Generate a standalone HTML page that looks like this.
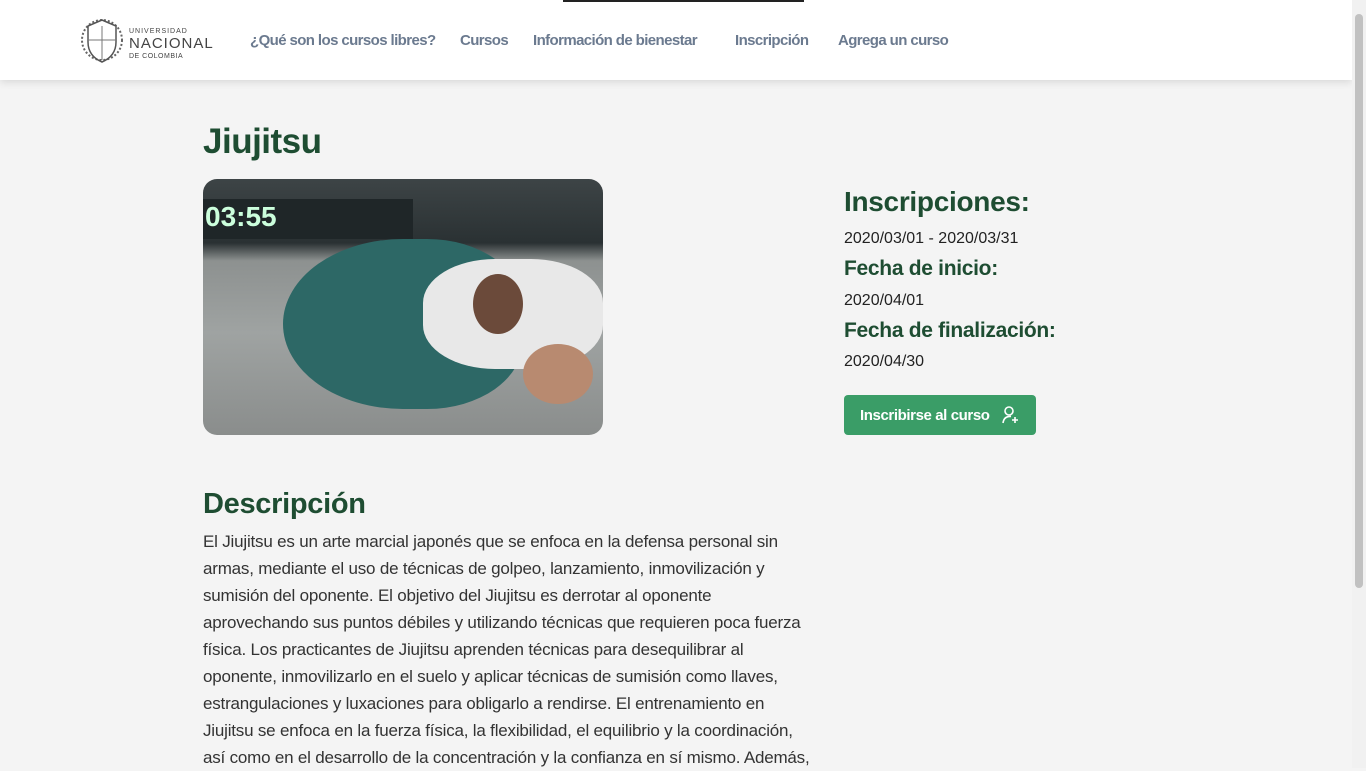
<!DOCTYPE html>
<html><head><meta charset="utf-8"><style>
*{margin:0;padding:0;box-sizing:border-box}
body{width:1366px;height:768px;overflow:hidden;background:#f4f4f4;font-family:"Liberation Sans",sans-serif;position:relative}
.hdr{position:absolute;left:0;top:0;width:1352px;height:80px;background:#fff;box-shadow:0 2px 8px rgba(0,0,0,.12)}
.topline{position:absolute;left:563px;top:0;width:241px;height:2px;background:#222}
.nav{position:absolute;top:32px;font-size:15px;font-weight:bold;color:#6b7a8f;letter-spacing:-.6px}
.logo{position:absolute;left:80px;top:12px}
.lt{position:absolute;left:129px;color:#444}
h1{position:absolute;left:203px;top:122px;font-size:35px;color:#1e4d32;letter-spacing:-.5px}
.img{position:absolute;left:203px;top:179px;width:400px;height:256px;border-radius:14px;overflow:hidden;background:linear-gradient(180deg,#3d4446 0%,#2a3133 25%,#8d9190 32%,#9fa3a2 60%,#8a8d8c 100%)}
.side h2{font-size:28px;color:#1e4d32;letter-spacing:-.3px}
.side h3{font-size:21px;color:#1e4d32;letter-spacing:-.3px}
.side p{font-size:16px;color:#222}
.btn{position:absolute;left:844px;top:395px;width:192px;height:40px;background:#3a9d67;border-radius:4px;color:#fff;font-weight:bold;font-size:15px;letter-spacing:-.4px;padding:12px 0 0 16px}
.desc{position:absolute;left:203px;top:488px;width:640px}
.desc h2{font-size:29px;color:#1e4d32;letter-spacing:-.3px;margin-bottom:7px}
.desc div{font-size:17px;line-height:27px;height:27px;color:#333;letter-spacing:-.2px;white-space:nowrap}
.sb{position:absolute;right:0;top:0;width:14px;height:768px;background:#f1f1f1}
.sb div{position:absolute;left:3px;top:14px;width:8px;height:574px;background:#c1c1c1;border-radius:4px}
</style></head><body>
<div class="hdr">
<svg class="logo" width="44" height="56" viewBox="0 0 44 56"><circle cx="22" cy="28" r="20" fill="none" stroke="#666" stroke-width="2" stroke-dasharray="2 2"/><path d="M22 8 L36 14 L36 30 Q36 44 22 50 Q8 44 8 30 L8 14Z" fill="none" stroke="#555" stroke-width="1.5"/><line x1="22" y1="14" x2="22" y2="48" stroke="#777"/><line x1="8" y1="28" x2="36" y2="28" stroke="#777"/></svg>
<div class="lt" style="top:28px;font-size:7px;letter-spacing:1px">UNIVERSIDAD</div>
<div class="lt" style="top:35px;font-size:15px;letter-spacing:1px">NACIONAL</div>
<div class="lt" style="top:53px;font-size:7px;letter-spacing:.5px">DE COLOMBIA</div>
<div class="nav" style="left:250px">¿Qué son los cursos libres?</div>
<div class="nav" style="left:460px">Cursos</div>
<div class="nav" style="left:533px">Información de bienestar</div>
<div class="nav" style="left:735px">Inscripción</div>
<div class="nav" style="left:838px">Agrega un curso</div>
</div>
<div class="topline"></div>
<h1>Jiujitsu</h1>
<div class="img">
<div style="position:absolute;left:0;top:20px;width:210px;height:40px;background:#1f2628"></div>
<div style="position:absolute;left:2px;top:22px;color:#cfd;font-size:28px;font-weight:bold">03:55</div>
<div style="position:absolute;left:80px;top:60px;width:240px;height:170px;border-radius:50% 40% 40% 50%;background:#2d6866"></div>
<div style="position:absolute;left:220px;top:80px;width:180px;height:110px;border-radius:40%;background:#e8e8e8"></div>
<div style="position:absolute;left:270px;top:95px;width:50px;height:60px;border-radius:50%;background:#6b4a3a"></div>
<div style="position:absolute;left:320px;top:165px;width:70px;height:60px;border-radius:50%;background:#b88a70"></div>
</div>
<div class="side">
<h2 style="position:absolute;left:844px;top:186px">Inscripciones:</h2>
<p style="position:absolute;left:844px;top:230px">2020/03/01 - 2020/03/31</p>
<h3 style="position:absolute;left:844px;top:257px">Fecha de inicio:</h3>
<p style="position:absolute;left:844px;top:292px">2020/04/01</p>
<h3 style="position:absolute;left:844px;top:319px">Fecha de finalización:</h3>
<p style="position:absolute;left:844px;top:353px">2020/04/30</p>
</div>
<div class="btn">Inscribirse al curso
<svg style="position:absolute;left:157px;top:10px" width="20" height="20" viewBox="0 0 20 20" fill="none" stroke="#fff" stroke-width="1.6"><circle cx="8" cy="6" r="4"/><path d="M2 18 Q3 11 10 11.5"/><path d="M14 12v6M11 15h6"/></svg>
</div>
<div class="desc"><h2>Descripción</h2>
<div>El Jiujitsu es un arte marcial japonés que se enfoca en la defensa personal sin</div>
<div>armas, mediante el uso de técnicas de golpeo, lanzamiento, inmovilización y</div>
<div>sumisión del oponente. El objetivo del Jiujitsu es derrotar al oponente</div>
<div>aprovechando sus puntos débiles y utilizando técnicas que requieren poca fuerza</div>
<div>física. Los practicantes de Jiujitsu aprenden técnicas para desequilibrar al</div>
<div>oponente, inmovilizarlo en el suelo y aplicar técnicas de sumisión como llaves,</div>
<div>estrangulaciones y luxaciones para obligarlo a rendirse. El entrenamiento en</div>
<div>Jiujitsu se enfoca en la fuerza física, la flexibilidad, el equilibrio y la coordinación,</div>
<div>así como en el desarrollo de la concentración y la confianza en sí mismo. Además,</div>
</div>
<div class="sb"><div></div></div>
</body></html>
